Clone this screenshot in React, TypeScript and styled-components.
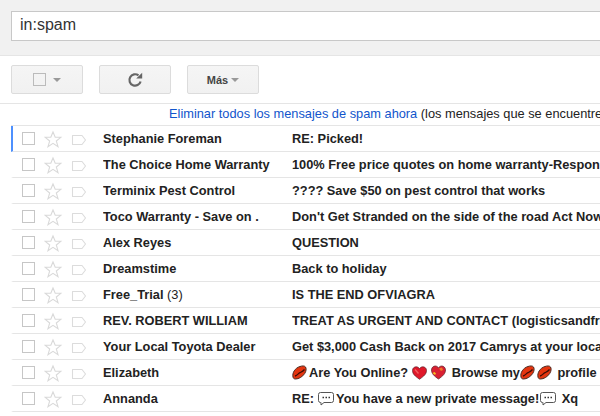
import React from "react";
import styled, { createGlobalStyle } from "styled-components";

const Global = createGlobalStyle`
  html, body { margin: 0; padding: 0; background: #fff; overflow: hidden; }
  body { font-family: "Liberation Sans", Arial, sans-serif; width: 600px; height: 416px; }
`;
const Page = styled.div`width: 600px; height: 416px; overflow: hidden; display: flex; flex-direction: column;`;
const SearchBand = styled.div`height: 56px; box-sizing: border-box; background: #f1f1f1; border-bottom: 1px solid #e5e5e5; padding: 11px 0 0 11px; flex: none;`;
const SearchBox = styled.div`width: 640px; height: 30px; box-sizing: border-box; background: #fff; border: 1px solid #c8c8c8; padding-left: 8px; font-size: 16px; line-height: 26px; color: #333;`;
const Toolbar = styled.div`height: 48px; box-sizing: border-box; display: flex; gap: 16px; padding: 9px 0 0 11px; border-bottom: 1px solid #e5e5e5; flex: none;`;
const ToolButton = styled.div<{ $w: number }>`
  width: ${(p) => p.$w}px; height: 29px; box-sizing: border-box; display: flex; align-items: center; justify-content: center; gap: 3px;
  background: linear-gradient(#f5f5f5, #f1f1f1); border: 1px solid #dcdcdc; border-radius: 2px;
  font-size: 11px; font-weight: bold; color: #444;
`;
const BoxIcon = styled.span`width: 11px; height: 11px; border: 1px solid #bbb; display: block; margin-right: 4px;`;
const Caret = styled.span`width: 0; height: 0; border-left: 4px solid transparent; border-right: 4px solid transparent; border-top: 4px solid #999; display: block;`;
const Notice = styled.div`height: 21px; line-height: 20px; font-size: 12.8px; white-space: nowrap; padding-left: 169px; color: #222; flex: none;`;
const NoticeLink = styled.a`color: #15c;`;
const List = styled.div`margin-left: 11px; border-top: 1px solid #e5e5e5; flex: none;`;
const Row = styled.div<{ $active?: boolean }>`
  height: 26px; box-sizing: border-box; display: flex; align-items: center; border-bottom: 1px solid #e5e5e5; background: #fff; white-space: nowrap; overflow: hidden;
  border-left: 2px solid ${(p) => (p.$active ? "#4d90fe" : "transparent")};
  font-size: 12.8px; font-weight: bold; color: #222;
`;
const Check = styled.span`width: 11px; height: 11px; border: 1px solid #c6c6c6; margin-left: 9px; flex: none;`;
const Icons = styled.svg`margin-left: 9px; flex: none; display: block;`;
const Sender = styled.div`width: 189px; margin-left: 1px; flex: none; overflow: hidden;`;
const Subject = styled.div`flex: none; display: flex; align-items: center; width: 320px; overflow: hidden;`;
const Plain = styled.span`white-space: pre;`;
const Emoji = styled.svg<{ $l?: number }>`flex: none; display: block; margin-left: ${(p) => p.$l ?? 0}px; margin-right: 2px;`;

const Lips = ({ l }: { l?: number }) => (
  <Emoji $l={l} width="15" height="15" viewBox="0 0 15 15">
    <path d="M1 12C0 8 3 3 8 1.500c2.500-.8 4.500-.8 5.500.5 1 1.500.8 4-.8 6.500C10.500 12 6.500 14 3.500 14 2 14 1.300 13.300 1 12z" fill="#e5350f" stroke="#4a2a22" strokeWidth="1" />
    <path d="M3 11c2-.3 2.800-2.200 5-3.300 1.500-.8 2.500-1 4.500-3.200" stroke="#3c0d06" strokeWidth="1.300" fill="none" />
  </Emoji>
);
const Heart = ({ l }: { l?: number }) => (
  <Emoji $l={l} width="15" height="14" viewBox="0 0 15 14">
    <path d="M7.500 13.300C3 10 .5 8 .5 4.500 .5 2 2.500.8 4.200.8c1.500 0 2.600.8 3.300 2 .7-1.200 1.800-2 3.300-2 1.700 0 3.700 1.200 3.700 3.700 0 3.500-2.500 5.500-7 8.800z" fill="#e0182a" stroke="#5a2028" strokeWidth=".7" />
    <path d="M3 3.500l3.500 4" stroke="#f0605f" strokeWidth="1.400" />
  </Emoji>
);
const BrokenHeart = ({ l }: { l?: number }) => (
  <Emoji $l={l} width="15" height="15" viewBox="0 0 15 15">
    <path d="M7.500 14C3 11 .5 8.500 .5 5 .5 2.500 2.500 1 4.200 1c1.500 0 2.600.8 3.300 2 .7-1.200 1.800-2 3.300-2 1.700 0 3.700 1.500 3.700 4 0 3.500-2.500 6-7 9z" fill="#d92032" stroke="#5a2028" strokeWidth=".7" />
    <path d="M1.500 8l2-1 1.500 1.500-1 1.500z" fill="#f7c21f" />
    <path d="M8 3.500l3-1 1 2.500-2 1z" fill="#ef7a2a" />
  </Emoji>
);
const Bubble = ({ l }: { l?: number }) => (
  <Emoji $l={l} width="16" height="15" viewBox="0 0 16 15">
    <path d="M2.500 1.500h11a2 2 0 0 1 2 2v6a2 2 0 0 1-2 2H6l-3 2.500v-2.500h-.5a2 2 0 0 1-2-2v-6a2 2 0 0 1 2-2z" fill="#fff" stroke="#555" />
    <path d="M4.500 6.500h1.500M7.500 6.500h1.500M10.500 6.500h1.500" stroke="#333" strokeWidth="1.300" />
  </Emoji>
);

const RowIcons = () => (
  <Icons width="58" height="18" viewBox="0 0 58 18">
    <path d="M9 2l2.200 5.300h5.600l-4.500 3.700 1.700 5.700L9 13.400l-5 3.300 1.700-5.700-4.500-3.700h5.600z" fill="none" stroke="#d9d9d9" strokeWidth="1.100" />
    <path d="M28.500 5.500h9.500l3.500 4.500-3.500 4.500h-9.500z" fill="none" stroke="#dcdcdc" strokeWidth="1.100" strokeLinejoin="round" />
  </Icons>
);

const rows: { s: React.ReactNode; t: React.ReactNode }[] = [
  { s: "Stephanie Foreman", t: "RE: Picked!" },
  { s: "The Choice Home Warranty", t: "100% Free price quotes on home warranty-Respond now" },
  { s: "Terminix Pest Control", t: "???? Save $50 on pest control that works" },
  { s: "Toco Warranty - Save on .", t: "Don't Get Stranded on the side of the road Act Now" },
  { s: "Alex Reyes", t: "QUESTION" },
  { s: "Dreamstime", t: "Back to holiday" },
  { s: <>Free_Trial <span style={{ fontWeight: 400 }}>(3)</span></>, t: "IS THE END OFVIAGRA" },
  { s: "REV. ROBERT WILLIAM", t: "TREAT AS URGENT AND CONTACT (logisticsandfreight" },
  { s: "Your Local Toyota Dealer", t: "Get $3,000 Cash Back on 2017 Camrys at your local dealer" },
  {
    s: "Elizabeth",
    t: (
      <>
        <Lips /><Plain>Are You Online?</Plain><Heart l={4} /><BrokenHeart l={2} /><Plain> Browse my</Plain><Lips /><Lips l={0} /><Plain> profile</Plain>
      </>
    ),
  },
  {
    s: "Annanda",
    t: (
      <>
        <Plain>RE:</Plain><Bubble l={4} /><Plain>You have a new private message!</Plain><Bubble l={1} /><Plain> Xq</Plain>
      </>
    ),
  },
];

export default function App() {
  return (
    <Page>
      <Global />
      <SearchBand><SearchBox>in:spam</SearchBox></SearchBand>
      <Toolbar>
        <ToolButton $w={72}><BoxIcon /><Caret /></ToolButton>
        <ToolButton $w={72}>
          <svg width="16" height="16" viewBox="0 0 16 16">
            <path d="M13.600 9.500A5.700 5.700 0 1 1 11.500 3.400" fill="none" stroke="#666" strokeWidth="2.200" />
            <path d="M9.200 6.600H15.200V.8z" fill="#666" />
          </svg>
        </ToolButton>
        <ToolButton $w={72}>Más<Caret /></ToolButton>
      </Toolbar>
      <Notice><NoticeLink>Eliminar todos los mensajes de spam ahora</NoticeLink> (los mensajes que se encuentren en spam)</Notice>
      <List>
        {rows.map((r, i) => (
          <Row key={i} $active={i === 0}>
            <Check />
            <RowIcons />
            <Sender>{r.s}</Sender>
            <Subject>{r.t}</Subject>
          </Row>
        ))}
      </List>
    </Page>
  );
}
